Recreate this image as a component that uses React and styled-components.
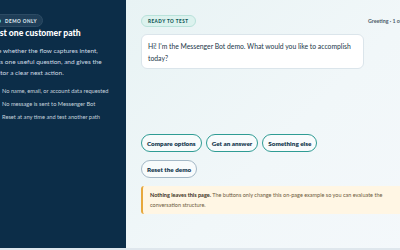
import React from "react";
import styled, { createGlobalStyle } from "styled-components";

const Global = createGlobalStyle`
  html, body { margin: 0; padding: 0; background: #dfe7ed; overflow: hidden; }
  body { font-family: Lato, "Open Sans", sans-serif; }
  * { box-sizing: border-box; }
`;

const Page = styled.div`
  display: flex;
  width: 442px;
  height: 248px;
  margin-left: -21px;
`;

const Sidebar = styled.aside`
  width: 147px;
  flex: none;
  background: #0c2d48;
  padding: 14px 12px 0 12px;
  color: #fff;
  display: flex;
  flex-direction: column;
`;

const DarkPill = styled.span`
  align-self: flex-start;
  display: inline-flex;
  align-items: center;
  gap: 4px;
  height: 13px;
  padding: 0 5px;
  border-radius: 999px;
  background: #1f3e58;
  border: 1px solid #2c4b64;
  color: #dbe6ee;
  font-size: 4.6px;
  font-weight: 900;
  letter-spacing: 0.5px;
  text-transform: uppercase;
`;

const Dot = styled.i`
  width: 4px;
  height: 4px;
  border-radius: 50%;
  background: #5fc9bd;
`;

const Heading = styled.h1`
  margin: 1px 0 0;
  font-size: 8.6px;
  line-height: 11px;
  font-weight: 900;
  color: #ffffff;
`;

const Lead = styled.p`
  margin: 5.5px 0 0;
  font-size: 6.5px;
  line-height: 11px;
  color: #cfdbe4;
`;

const Checks = styled.ul`
  list-style: none;
  margin: 9px 0 0;
  padding: 0;
  display: flex;
  flex-direction: column;
  gap: 4.6px;
`;

const Check = styled.li`
  display: flex;
  align-items: center;
  gap: 4px;
  font-size: 5.7px;
  line-height: 8.4px;
  color: #c6d3dd;
`;

const Main = styled.main`
  flex: 1;
  background: linear-gradient(135deg, #e8f3f4 0%, #f1f7f9 55%, #f4f8fb 100%);
  padding: 15px 15px 34px;
  display: flex;
  flex-direction: column;
`;

const Header = styled.div`
  display: flex;
  align-items: center;
  justify-content: space-between;
`;

const StatusPill = styled.span`
  display: inline-flex;
  align-items: center;
  height: 12px;
  padding: 0 6px;
  border-radius: 999px;
  background: #dcf2ee;
  border: 1px solid #b9e2da;
  color: #0f5656;
  font-size: 4.6px;
  font-weight: 900;
  letter-spacing: 0.5px;
  text-transform: uppercase;
`;

const Step = styled.span`
  font-size: 5.3px;
  font-weight: 700;
  color: #4d5c69;
  white-space: nowrap;
`;

const Bubble = styled.div`
  margin-top: 7px;
  width: 223px;
  background: #ffffff;
  border: 1px solid #dbe5eb;
  border-radius: 6px;
  padding: 5px 6px 4px 6px;
  font-size: 6.8px;
  line-height: 12px;
  color: #223649;
`;

const Choices = styled.div`
  margin-top: auto;
  display: flex;
  gap: 4px;
`;

const Chip = styled.button`
  height: 18px;
  padding: 0 5px;
  border-radius: 999px;
  background: rgba(255, 255, 255, 0.55);
  border: 1px solid ${(p) => (p.$muted ? "#a4b8c6" : "#2f9c94")};
  color: #163a50;
  font-family: Lato, "Open Sans", sans-serif;
  font-size: 6.3px;
  font-weight: 800;
  cursor: pointer;
  align-self: flex-start;
`;

const ResetRow = styled.div`
  margin-top: 8px;
  display: flex;
`;

const Notice = styled.div`
  margin-top: 8px;
  background: #fff6e4;
  border-left: 2px solid #e7a83c;
  border-radius: 3px;
  padding: 4px 8px 4px 7px;
  font-size: 5.5px;
  line-height: 10px;
  color: #6c5a3c;
  b { color: #3b3122; font-weight: 700; }
`;

const CheckIcon = () => (
  <svg width="7" height="7" viewBox="0 0 10 10">
    <circle cx="5" cy="5" r="5" fill="#1f6b6b" />
    <path d="M2.8 5.2 L4.4 6.7 L7.3 3.6" stroke="#fff" strokeWidth="1.3" fill="none" />
  </svg>
);

export default function App() {
  const checks = [
    "No name, email, or account data requested",
    "No message is sent to Messenger Bot",
    "Reset at any time and test another path",
  ];
  return (
    <>
      <Global />
      <Page>
        <Sidebar>
          <DarkPill>
            <Dot />
            Demo only
          </DarkPill>
          <Heading>Test one customer path</Heading>
          <Lead>
            See whether the flow captures intent,
            <br />
            asks one useful question, and gives the
            <br />
            visitor a clear next action.
          </Lead>
          <Checks>
            {checks.map((c) => (
              <Check key={c}>
                <CheckIcon />
                {c}
              </Check>
            ))}
          </Checks>
        </Sidebar>
        <Main>
          <Header>
            <StatusPill>Ready to test</StatusPill>
            <Step>Greeting · 1 of 3</Step>
          </Header>
          <Bubble>
            Hi! I'm the Messenger Bot demo. What would you like to accomplish today?
          </Bubble>
          <Choices>
            <Chip>Compare options</Chip>
            <Chip>Get an answer</Chip>
            <Chip>Something else</Chip>
          </Choices>
          <ResetRow>
            <Chip $muted>Reset the demo</Chip>
          </ResetRow>
          <Notice>
            <b>Nothing leaves this page.</b> The buttons only change this on-page example so you can evaluate the conversation structure.
          </Notice>
        </Main>
      </Page>
    </>
  );
}
